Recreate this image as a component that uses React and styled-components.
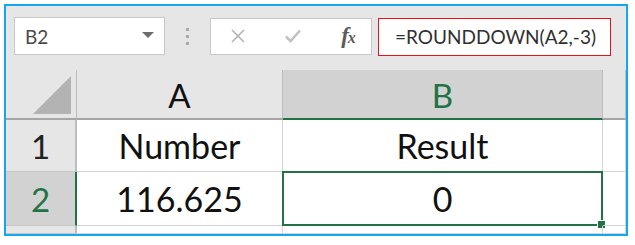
import styled, { createGlobalStyle } from "styled-components";

const GlobalStyle = createGlobalStyle`
  html, body {
    margin: 0;
    padding: 0;
    background: #ffffff;
  }
`;

const Frame = styled.div`
  margin: 4px 0 0 4px;
  width: 620px;
  height: 228px;
  border: 2px solid #14a7ec;
  background: #e6e6e6;
  display: flex;
  flex-direction: column;
  overflow: hidden;
`;

const Toolbar = styled.div`
  display: flex;
  align-items: center;
  height: 38px;
  padding: 11px 0 0 8px;
`;

const NameBox = styled.div`
  box-sizing: border-box;
  width: 151px;
  height: 38px;
  background: #ffffff;
  border: 1px solid #c8c8c8;
  display: flex;
  align-items: center;
  justify-content: space-between;
  padding: 0 10px 0 10px;
  font-family: Lato, "Liberation Sans", sans-serif;
  font-size: 19px;
  color: #4a4a4a;
`;

const Caret = styled.span`
  width: 0;
  height: 0;
  border-left: 6px solid transparent;
  border-right: 6px solid transparent;
  border-top: 6px solid #6d6d6d;
  margin-bottom: 2px;
`;

const Grip = styled.div`
  width: 45px;
  display: flex;
  flex-direction: column;
  align-items: center;
  gap: 4px;

  span {
    width: 3px;
    height: 3px;
    background: #a9a9a9;
  }
`;

const ButtonBox = styled.div`
  box-sizing: border-box;
  width: 162px;
  height: 37px;
  background: #ffffff;
  border: 1px solid #c8c8c8;
  display: flex;
  align-items: center;
  padding-left: 17px;
`;

const IconSlot = styled.div`
  width: ${(p) => p.$w}px;
  display: flex;
  align-items: center;
  justify-content: center;
`;

const Fx = styled.span`
  font-family: "Liberation Serif", serif;
  font-style: italic;
  font-weight: bold;
  color: #5b5b5b;
  font-size: 23px;
  letter-spacing: -1px;

  small {
    font-size: 16px;
  }
`;

const FormulaInput = styled.div`
  box-sizing: border-box;
  margin-left: 6px;
  margin-top: 1px;
  width: 233px;
  height: 38px;
  background: #ffffff;
  border: 1px solid #e8101a;
  display: flex;
  align-items: center;
  padding-left: 16px;
  font-family: Lato, "Liberation Sans", sans-serif;
  font-size: 19px;
  color: #303030;
`;

const Sheet = styled.div`
  margin-top: 15px;
  flex: 1;
  display: grid;
  grid-template-columns: 71px 206px 320px 1fr;
  grid-template-rows: 50px 52px 54px 1fr;
  background: #ffffff;
  font-family: Lato, "Liberation Sans", sans-serif;
`;

const Corner = styled.div`
  background: #e6e6e6;
  border-right: 1px solid #bdbdbd;
  border-bottom: 2px solid #a6a6a6;
  position: relative;

  &::after {
    content: "";
    position: absolute;
    right: 5px;
    bottom: 4px;
    width: 38px;
    height: 38px;
    background: #b3b3b3;
    clip-path: polygon(100% 0, 100% 100%, 0 100%);
  }
`;

const ColHead = styled.div`
  box-sizing: border-box;
  background: ${(p) => (p.$active ? "#d2d2d2" : "#e6e6e6")};
  border-right: 1px solid #bdbdbd;
  border-bottom: 2px solid ${(p) => (p.$active ? "#217346" : "#a6a6a6")};
  display: flex;
  align-items: center;
  justify-content: center;
  font-size: 33px;
  color: ${(p) => (p.$active ? "#217346" : "#111111")};
  padding-top: 2px;
`;

const RowHead = styled.div`
  box-sizing: border-box;
  background: ${(p) => (p.$active ? "#d2d2d2" : "#e6e6e6")};
  border-right: 2px solid ${(p) => (p.$active ? "#217346" : "#bdbdbd")};
  border-bottom: 1px solid #c6c6c6;
  display: flex;
  align-items: center;
  justify-content: center;
  font-size: 33px;
  color: ${(p) => (p.$active ? "#217346" : "#222222")};
`;

const Cell = styled.div`
  box-sizing: border-box;
  border-right: 1px solid #d4d4d4;
  border-bottom: 1px solid #d4d4d4;
  display: flex;
  align-items: center;
  justify-content: center;
  font-size: 34px;
  color: #111111;
  position: relative;
`;

const SelectedCell = styled(Cell)`
  border: 2px solid #217346;
  margin: -1px 0 0 -1px;

  &::after {
    content: "";
    position: absolute;
    right: -5px;
    bottom: -5px;
    width: 7px;
    height: 7px;
    background: #217346;
    border: 1px solid #ffffff;
  }
`;

function App() {
  return (
    <>
      <GlobalStyle />
      <Frame>
        <Toolbar>
          <NameBox>
            B2
            <Caret />
          </NameBox>
          <Grip>
            <span />
            <span />
            <span />
          </Grip>
          <ButtonBox>
            <IconSlot $w={20}>
              <svg width="16" height="16" viewBox="0 0 16 16">
                <path d="M2 2 L14 14 M14 2 L2 14" stroke="#b4b4b4" strokeWidth="1.6" fill="none" />
              </svg>
            </IconSlot>
            <IconSlot $w={90}>
              <svg width="18" height="16" viewBox="0 0 18 16">
                <path d="M2 8.5 L6.5 13 L16 2.5" stroke="#c2c2c2" strokeWidth="2.6" fill="none" />
              </svg>
            </IconSlot>
            <IconSlot $w={20}>
              <Fx>
                f<small>x</small>
              </Fx>
            </IconSlot>
          </ButtonBox>
          <FormulaInput>=ROUNDDOWN(A2,-3)</FormulaInput>
        </Toolbar>
        <Sheet>
          <Corner />
          <ColHead>A</ColHead>
          <ColHead $active>B</ColHead>
          <ColHead />

          <RowHead>1</RowHead>
          <Cell>Number</Cell>
          <Cell>Result</Cell>
          <Cell />

          <RowHead $active>2</RowHead>
          <Cell>116.625</Cell>
          <SelectedCell>0</SelectedCell>
          <Cell />

          <RowHead />
          <Cell />
          <Cell />
          <Cell />
        </Sheet>
      </Frame>
    </>
  );
}

export default App;
